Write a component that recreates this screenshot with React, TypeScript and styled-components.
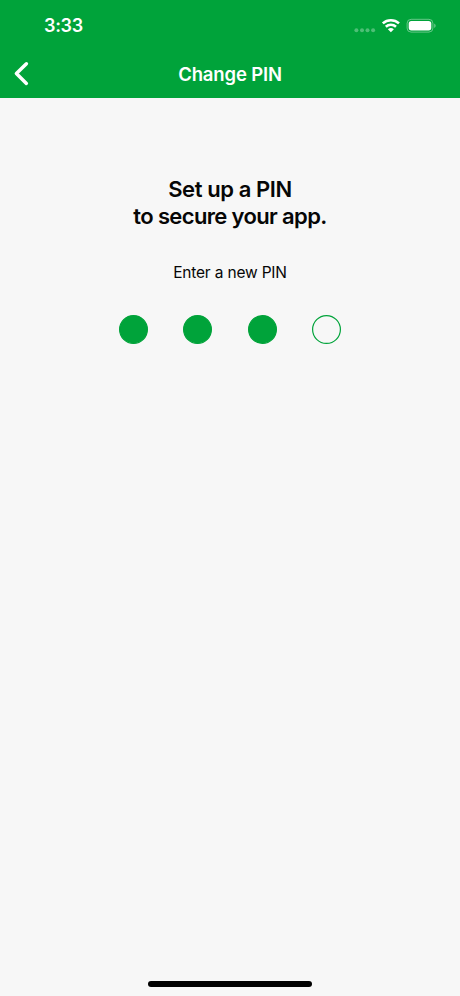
import React from "react";
import styled, { createGlobalStyle } from "styled-components";

const GREEN = "#00a33a";

const GlobalStyle = createGlobalStyle`
  *, *::before, *::after { box-sizing: border-box; }
  body { margin: 0; background: #f7f7f7; }
`;

const Screen = styled.div`
  width: 460px;
  height: 996px;
  display: flex;
  flex-direction: column;
  background: #f7f7f7;
  color: #060606;
  font-family: Inter, "Liberation Sans", sans-serif;
  overflow: hidden;
`;

const Header = styled.header`
  height: 98px;
  background: ${GREEN};
  color: #fff;
`;

const StatusBar = styled.div`
  height: 51px;
  padding: 0 22px 0 44px;
  display: flex;
  align-items: center;
  justify-content: space-between;
`;

const Clock = styled.span`
  font-size: 18px;
  line-height: 23px;
  font-weight: 600;
  letter-spacing: -0.3px;
`;

const StatusIcons = styled.div`
  display: flex;
  align-items: center;
`;

const NavBar = styled.nav`
  height: 46px;
  display: grid;
  grid-template-columns: 44px 1fr 44px;
  align-items: center;
`;

const BackButton = styled.button`
  width: 44px;
  height: 46px;
  padding: 0 0 0 13px;
  border: 0;
  background: none;
  display: flex;
  align-items: center;
`;

const Title = styled.h1`
  margin: 0;
  text-align: center;
  font-size: 18.5px;
  line-height: 24px;
  font-weight: 600;
  letter-spacing: -0.15px;
`;

const Content = styled.main`
  flex: 1;
  display: flex;
  flex-direction: column;
  align-items: center;
  padding-top: 78px;
`;

const Heading = styled.h2`
  margin: 0;
  text-align: center;
  font-size: 22px;
  line-height: 27px;
  font-weight: 600;
`;

const HeadingLine = styled.span<{ $tracking: number }>`
  display: block;
  letter-spacing: ${(p) => p.$tracking}px;
`;

const Prompt = styled.p`
  margin: 33px 0 0;
  font-size: 15.5px;
  line-height: 20px;
  letter-spacing: -0.18px;
`;

const PinRow = styled.div`
  margin-top: 31.5px;
  display: flex;
  gap: 35.4px;
`;

const PinDot = styled.svg`
  width: 29px;
  height: 29px;
  display: block;
  overflow: visible;
`;

const Footer = styled.footer`
  height: 15px;
  display: flex;
  justify-content: center;
`;

const HomeIndicator = styled.div`
  width: 164px;
  height: 6px;
  border-radius: 3px;
  background: #000;
`;

const pin = [true, true, true, false];

export default function App() {
  return (
    <Screen>
      <GlobalStyle />
      <Header>
        <StatusBar>
          <Clock>3:33</Clock>
          <StatusIcons>
            <svg width="84" height="17" viewBox="0 0 84 17" fill="#fff">
              <g opacity="0.3">
                <circle cx="2.4" cy="13.2" r="2" />
                <circle cx="8" cy="13.2" r="2" />
                <circle cx="13.5" cy="13.2" r="2" />
                <circle cx="19.1" cy="13.2" r="2" />
              </g>
              <g fill="none" stroke="#fff" strokeWidth="2.6">
                <path d="M28.8 6.4a12 12 0 0 1 16.2 0" />
                <path d="M31.8 9.7a7.6 7.6 0 0 1 10.2 0" />
              </g>
              <path d="M36.9 15.3l-3-3a4.4 4.4 0 0 1 6 0z" />
              <rect x="53.1" y="2.3" width="25.8" height="12.8" rx="4" fill="none" stroke="#fff" strokeOpacity="0.4" />
              <rect x="54.7" y="3.9" width="22.6" height="9.6" rx="2.7" />
              <path d="M80.2 6.6c2 .8 2 3.6 0 4.4z" opacity="0.4" />
            </svg>
          </StatusIcons>
        </StatusBar>
        <NavBar>
          <BackButton aria-label="Back">
            <svg width="16" height="26" viewBox="0 0 16 26" fill="none" stroke="#fff" strokeWidth="3.5" strokeLinecap="round" strokeLinejoin="round">
              <path d="M13.4 2.8L3.4 12.6l10 9.8" />
            </svg>
          </BackButton>
          <Title>Change PIN</Title>
        </NavBar>
      </Header>
      <Content>
        <Heading>
          <HeadingLine $tracking={-0.4}>Set up a PIN</HeadingLine>
          <HeadingLine $tracking={-0.64}>to secure your app.</HeadingLine>
        </Heading>
        <Prompt>Enter a new PIN</Prompt>
        <PinRow>
          {pin.map((filled, i) => (
            <PinDot key={i} viewBox="0 0 29 29">
              <circle cx="14.5" cy="14.5" r="13.9" fill={filled ? GREEN : "none"} stroke={GREEN} strokeWidth="1.2" />
            </PinDot>
          ))}
        </PinRow>
      </Content>
      <Footer>
        <HomeIndicator />
      </Footer>
    </Screen>
  );
}
